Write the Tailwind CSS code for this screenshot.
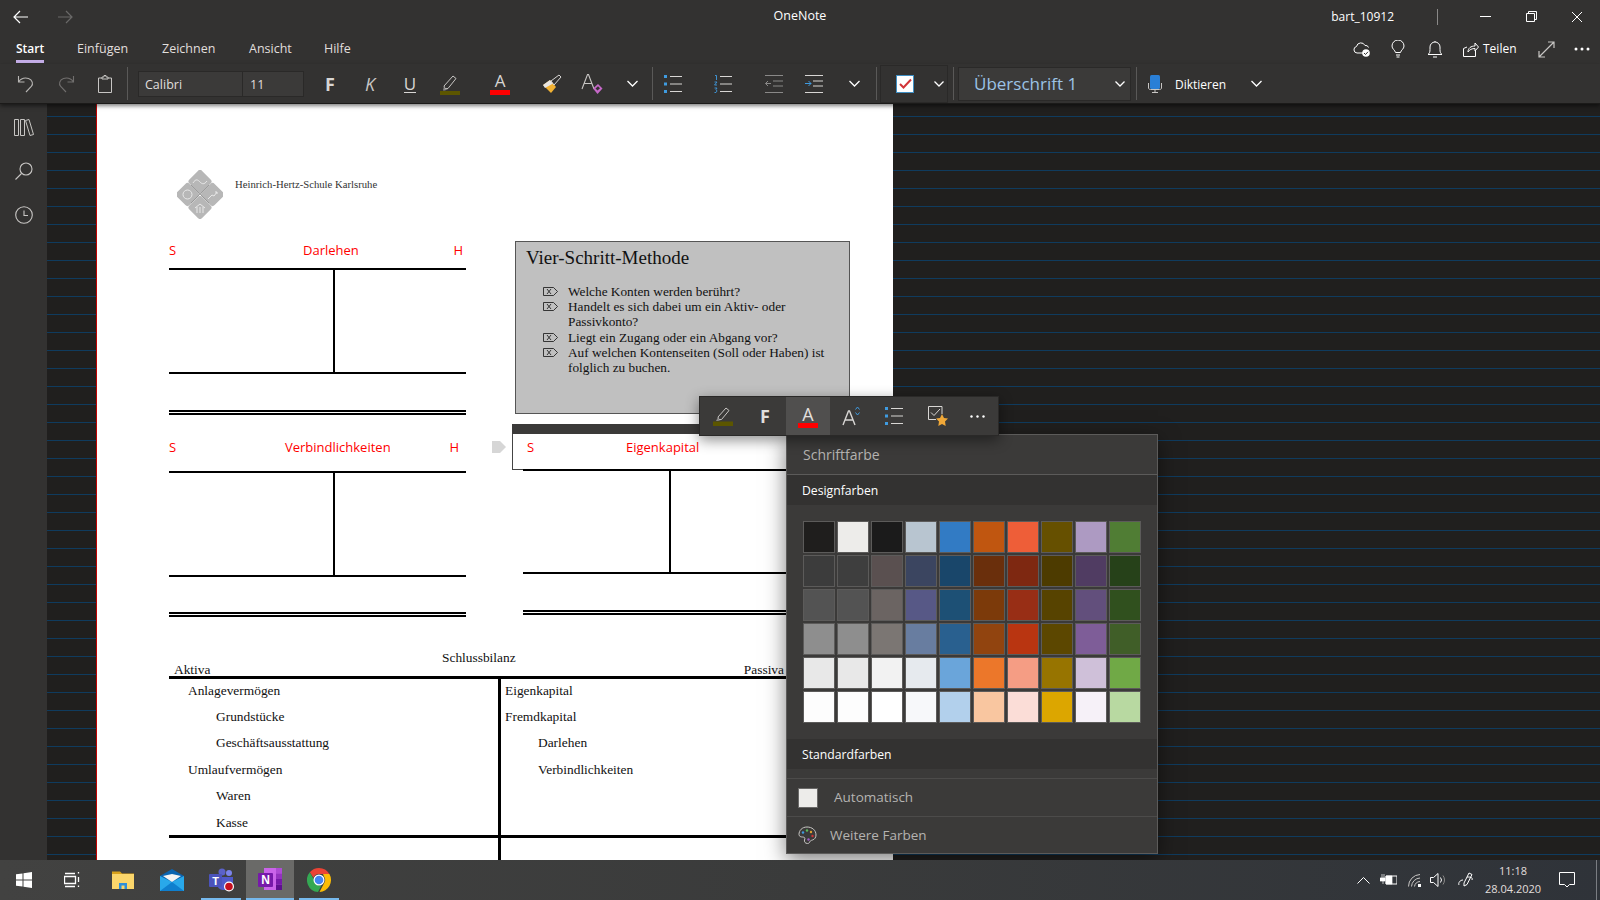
<!DOCTYPE html>
<html lang="de">
<head>
  <meta charset="UTF-8" />
  <title>OneNote</title>
  <script src="https://cdn.jsdelivr.net/npm/@tailwindcss/browser@4"></script>
</head>
<body class="w-[1600px] h-[900px] overflow-hidden flex flex-col bg-[#201f1e] font-['Open_Sans','Noto_Sans',sans-serif] text-[#e1dfdd]">

  <!-- Titelleiste -->
  <header class="h-[32px] pt-[1px] bg-[#333231] grid grid-cols-[1fr_auto_1fr] items-center text-[12.5px] text-white">
    <div class="flex items-center">
      <div class="w-[42px] flex justify-center">
        <svg width="16" height="14" viewBox="0 0 16 14" fill="none" stroke="#fff" stroke-width="1.2"><path d="M15 7H1M7 1 1 7l6 6"/></svg>
      </div>
      <div class="w-[46px] flex justify-center">
        <svg width="16" height="14" viewBox="0 0 16 14" fill="none" stroke="#6a6968" stroke-width="1.2"><path d="M1 7h14M9 1l6 6-6 6"/></svg>
      </div>
    </div>
    <div>OneNote</div>
    <div class="flex items-center justify-end">
      <span class="mr-[43px] text-[12px]">bart_10912</span>
      <span class="w-px h-[16px] bg-[#8a8988] mr-[24px]"></span>
      <div class="w-[46px] flex justify-center"><svg width="11" height="11" viewBox="0 0 11 11" stroke="#fff"><path d="M0 5.5h11"/></svg></div>
      <div class="w-[46px] flex justify-center"><svg width="11" height="11" viewBox="0 0 11 11" fill="none" stroke="#fff"><path d="M.5 2.500h8v8h-8zM2.500 2.500v-2h8v8h-2"/></svg></div>
      <div class="w-[46px] flex justify-center"><svg width="12" height="12" viewBox="0 0 12 12" stroke="#fff"><path d="M1 1l10 10M11 1 1 11"/></svg></div>
    </div>
  </header>

  <!-- Tabs -->
  <nav class="h-[32px] bg-[#333231] flex items-start pt-[8px] pl-[16px] text-[12.5px] leading-[18px]">
    <div class="w-[61px]"><span class="inline-block text-[12px] font-semibold text-white border-b-[3px] border-[#c5aee8] pb-[2px]">Start</span></div>
    <div class="w-[85px]">Einfügen</div>
    <div class="w-[87px]">Zeichnen</div>
    <div class="w-[75px]">Ansicht</div>
    <div>Hilfe</div>
    <div class="ml-auto flex items-center h-[18px] text-white">
      <div class="w-[36px] flex justify-center">
        <svg width="18" height="16" viewBox="0 0 18 16" fill="none" stroke="#fff"><path d="M10 12H4a3.3 3.3 0 0 1-.5-6.500A4.500 4.500 0 0 1 12 4.500a3 3 0 0 1 3.500 2"/><circle cx="13" cy="12" r="3.800" fill="#fff" stroke="none"/><path d="M11 12l1.500 1.500L15 10.800" stroke="#333231"/></svg>
      </div>
      <div class="w-[36px] flex justify-center">
        <svg width="14" height="18" viewBox="0 0 14 18" fill="none" stroke="#fff"><path d="M4.500 12.500C4 10 1 9 1 6a6 6 0 0 1 12 0c0 3-3 4-3.500 6.500zM5 15h4M5.500 17h3"/></svg>
      </div>
      <div class="w-[38px] flex justify-center">
        <svg width="16" height="18" viewBox="0 0 16 18" fill="none" stroke="#fff"><path d="M1 14.500c1.500-1 2-2.500 2-5V7a5 5 0 0 1 10 0v2.500c0 2.500.5 4 2 5zM6 17h4M8 2V1"/></svg>
      </div>
      <div class="w-[29px] flex justify-center pl-[4px]">
        <svg width="16" height="16" viewBox="0 0 16 16" fill="none" stroke="#fff"><path d="M12.500 9v6.500H.5V7.500L4 6M5 11c0-4 3-6 7-6V2l3.500 4L12 10V7.500C9 7.500 6.500 8.500 5 11z"/></svg>
      </div>
      <span class="w-[45px] text-[12px]">Teilen</span>
      <div class="w-[36px] flex justify-center">
        <svg width="17" height="17" viewBox="0 0 17 17" fill="none" stroke="#c8c6c4" stroke-width="1.200"><path d="M1 16 16 1M10 1h6v6M1 10v6h6"/></svg>
      </div>
      <div class="w-[36px] flex justify-center pr-[1px]">
        <svg width="16" height="4" viewBox="0 0 16 4" fill="#fff"><circle cx="2" cy="2" r="1.500"/><circle cx="8" cy="2" r="1.500"/><circle cx="14" cy="2" r="1.500"/></svg>
      </div>
    </div>
  </nav>

  <!-- Werkzeugleiste -->
  <div class="relative z-10 h-[40px] bg-[#333231] flex items-center pl-[5px] text-[12.5px] border-b border-[#1b1a19] shadow-[0_2px_4px_rgba(0,0,0,0.5)]">
    <div class="w-[41px] flex justify-center"><svg width="18" height="18" viewBox="0 0 18 18" fill="none" stroke="#b8b6b4" stroke-width="1.100"><path d="M1.500 1v6h6M1.500 7C4 3.500 8 2.500 11.500 3.500c4 1.300 5 5.500 2.800 8L9 17"/></svg></div>
    <div class="w-[39px] flex justify-center"><svg width="18" height="18" viewBox="0 0 18 18" fill="none" stroke="#716f6e" stroke-width="1.100"><path d="M16.500 1v6h-6M16.500 7C14 3.500 10 2.500 6.500 3.500c-4 1.300-5 5.500-2.800 8L9 17"/></svg></div>
    <div class="w-[40px] flex justify-center"><svg width="14" height="18" viewBox="0 0 14 18" fill="none" stroke="#c8c6c4"><path d="M4 3H.5v14.500h13V3H10M4 4V2h2V.5h2V2h2v2z"/></svg></div>
    <span class="ml-[2px] w-px h-[33px] bg-[#5a5958]"></span>
    <div class="ml-[10px] w-[166px] h-[26px] flex border border-[#2a2928] bg-[#3b3a39]">
      <span class="w-[104px] pl-[6px] leading-[26px] border-r border-[#2a2928]">Calibri</span>
      <span class="pl-[7px] leading-[26px]">11</span>
    </div>
    <div class="ml-[6px] w-[40px] text-center text-[18px] font-bold leading-none text-[#d8d6d4]">F</div>
    <div class="w-[40px] text-center text-[18px] italic leading-none text-[#c8c6c4]">K</div>
    <div class="w-[40px] text-center text-[17px] leading-none text-[#d8d6d4] flex justify-center"><span class="border-b border-[#d8d6d4]">U</span></div>
    <div class="w-[40px] flex justify-center">
      <svg width="20" height="22" viewBox="0 0 20 22"><path d="M4 13 13 3l3 2.500-8 10H5z" fill="none" stroke="#c8c6c4"/><path d="M4 13l1 2.500 3 .500-3 1.500H3z" fill="#8a8988"/><rect y="18" width="20" height="4" fill="#5c5600"/></svg>
    </div>
    <div class="ml-[10px] w-[40px] flex flex-col items-center">
      <span class="text-[17px] leading-[18px] text-[#d8d6d4]">A</span>
      <span class="w-[20px] h-[5px] bg-[#ff0000]"></span>
    </div>
    <div class="ml-[12px] w-[40px] flex justify-center">
      <svg width="20" height="20" viewBox="0 0 20 20"><path d="M1 11l7-5 6 7-5 6z" fill="#f2b233"/><path d="M1 11l7-5 3 3.500L3 14z" fill="#e8e6e3"/><path d="M9 7l3 4 7-8-2-2z" fill="none" stroke="#d8d6d4"/></svg>
    </div>
    <div class="w-[40px] flex justify-center">
      <svg width="22" height="22" viewBox="0 0 22 22"><path d="M1 16 6.500 1.500h1L13 16M3.500 10.500h7" fill="none" stroke="#c8c6c4" stroke-width="1.100"/><path d="M12 15.500 17 11l4.500 4.500L16.500 21z" fill="#c668c8"/><path d="M14.500 15.500 17 13.300l2 2-2.500 2.300z" fill="#333231"/></svg>
    </div>
    <div class="w-[40px] flex justify-center"><svg width="11" height="7" viewBox="0 0 11 7" fill="none" stroke="#fff" stroke-width="1.300"><path d="M.5 1l5 5 5-5"/></svg></div>
    <span class="w-px h-[33px] bg-[#5a5958]"></span>
    <div class="w-[39px] flex justify-center">
      <svg width="18" height="18" viewBox="0 0 18 18"><path d="M0 0h3v3H0zM0 7.500h3v3H0zM0 15h3v3H0z" fill="#3f9be0"/><path d="M6 1.500h12M6 9h12M6 16.500h12" stroke="#d8d6d4"/></svg>
    </div>
    <div class="ml-[11px] w-[40px] flex justify-center">
      <svg width="18" height="18" viewBox="0 0 18 18"><path d="M1 .5h1.500V5M.5 7h2.500L.5 10h2.500M.5 13h2.500l-1 1.500 1 1.500-1 1.500H.5" fill="none" stroke="#3f9be0" stroke-width=".9"/><path d="M6 1.500h12M6 9h12M6 16.500h12" stroke="#d8d6d4"/></svg>
    </div>
    <div class="ml-[11px] w-[40px] flex justify-center">
      <svg width="18" height="18" viewBox="0 0 18 18" fill="none" stroke="#8a8988"><path d="M0 .5h18M8 6h10M8 11h10M0 17.500h18M6 8.500H.5M3 6 .5 8.500 3 11"/></svg>
    </div>
    <div class="w-[40px] flex justify-center">
      <svg width="18" height="18" viewBox="0 0 18 18" fill="none"><path d="M0 .5h18M8 6h10M8 11h10M0 17.500h18" stroke="#d8d6d4"/><path d="M0 8.500h6M3.500 6 6 8.500 3.500 11" stroke="#3f9be0"/></svg>
    </div>
    <div class="w-[40px] flex justify-center"><svg width="11" height="7" viewBox="0 0 11 7" fill="none" stroke="#fff" stroke-width="1.300"><path d="M.5 1l5 5 5-5"/></svg></div>
    <span class="ml-[2px] w-px h-[33px] bg-[#5a5958]"></span>
    <div class="ml-[3px] w-[68px] h-[38px] flex items-center border border-[#2a2928]">
      <div class="ml-[15px] w-[18px] h-[18px] bg-white border border-[#3f8fc4] flex items-center justify-center">
        <svg width="13" height="11" viewBox="0 0 13 11" fill="none" stroke="#d13438" stroke-width="2"><path d="M1 6l3.500 3.500L12 1.500"/></svg>
      </div>
      <svg class="ml-[20px]" width="10" height="6" viewBox="0 0 10 6" fill="none" stroke="#fff" stroke-width="1.300"><path d="M.5.500l4.500 4.500L9.500.5"/></svg>
    </div>
    <span class="ml-[5px] w-px h-[33px] bg-[#5a5958]"></span>
    <div class="ml-[4px] w-[173px] h-[34px] flex items-center border border-[#2a2928] bg-[#3b3a39] text-[17px] text-[#9cc3e6]">
      <span class="pl-[15px]">Überschrift 1</span>
      <svg class="ml-auto mr-[5px]" width="10" height="6" viewBox="0 0 10 6" fill="none" stroke="#fff" stroke-width="1.300"><path d="M.5.500l4.500 4.500L9.500.5"/></svg>
    </div>
    <span class="ml-[5px] w-px h-[33px] bg-[#5a5958]"></span>
    <div class="ml-[6px] w-[24px] flex justify-center">
      <svg width="14" height="18" viewBox="0 0 14 18"><rect x="2" y="0" width="10" height="14" rx="1.500" fill="#2a7fd6"/><path d="M.5 8v5c0 1 1 1.500 2 1.500h9c1 0 2-.5 2-1.500V8M7 15v2M4 17.500h6" fill="none" stroke="#c8c6c4"/></svg>
    </div>
    <span class="ml-[8px] mt-[2px] w-[50px] text-[12px] whitespace-nowrap text-white">Diktieren</span>
    <div class="ml-[11px] w-[40px] flex justify-center"><svg width="11" height="7" viewBox="0 0 11 7" fill="none" stroke="#fff" stroke-width="1.300"><path d="M.5 1l5 5 5-5"/></svg></div>
  </div>

  <main class="relative flex-1 flex overflow-hidden min-h-0">
    <!-- Seitenleiste -->
    <aside class="w-[47px] shrink-0 bg-[#333231] flex flex-col items-center pt-[15px]">
      <svg width="20" height="17" viewBox="0 0 20 17" fill="none" stroke="#c8c6c4"><path d="M.5.500h4v16h-4zM6.500.500h4v16h-4zM11.500 1.500l3.500-1 4.500 15-3.500 1z"/></svg>
      <svg class="mt-[26px]" width="18" height="18" viewBox="0 0 18 18" fill="none" stroke="#c8c6c4" stroke-width="1.100"><circle cx="11" cy="7" r="6"/><path d="M6.500 11.500 .5 17.500"/></svg>
      <svg class="mt-[26px]" width="18" height="18" viewBox="0 0 18 18" fill="none" stroke="#c8c6c4" stroke-width="1.100"><circle cx="9" cy="9" r="8.300"/><path d="M9 4.500V9.500h4"/></svg>
    </aside>

    <!-- Notizbereich -->
    <section class="flex-1 pl-[49px] bg-[#201f1e] bg-[linear-gradient(to_bottom,transparent_12px,#0f3b5e_12px,#0f3b5e_13px,transparent_13px)] bg-[size:100%_18px]">
      <div class="relative w-[797px] h-full bg-white border-l border-[#c00000] text-black overflow-hidden">

        <svg class="absolute left-[80px] top-[66px]" width="46" height="49" viewBox="0 0 46 49">
          <g fill="#b7b7b7">
            <rect x="14" y="2.500" width="18" height="18" rx="3" transform="rotate(45 23 11.500)"/>
            <rect x="1.500" y="15.500" width="18" height="18" rx="3" transform="rotate(45 10.500 24.500)"/>
            <rect x="26.500" y="15.500" width="18" height="18" rx="3" transform="rotate(45 35.500 24.500)"/>
            <rect x="14" y="28.500" width="18" height="18" rx="3" transform="rotate(45 23 37.500)"/>
          </g>
          <g fill="none" stroke="#e8e8e8" stroke-width="1">
            <path d="M16 13c3-5 5-3 7-1s4 3 7-1"/>
            <circle cx="10.500" cy="24.500" r="4.500"/>
            <path d="M31 29l4-4 2 1 3-4M38 22h2v2"/>
            <path d="M18 38l5-4 5 4M20 37v6M26 37v6M23 37v6"/>
          </g>
          <path d="M14 15l18 18M32 15 14 33" stroke="#8f8f8f" stroke-width=".8"/>
        </svg>
        <div class="absolute left-[138px] top-[70px] font-['Liberation_Serif',serif] text-[10.700px] leading-[21px] text-[#333]">Heinrich-Hertz-Schule Karlsruhe</div>

        <!-- Darlehen -->
        <div class="absolute left-[72px] top-[137px] w-[297px]">
          <div class="flex h-[27px] text-[#ff0000] text-[13px] leading-[18px]">
            <span class="w-[134px]">S</span><span class="flex-1">Darlehen</span><span class="pr-[3px]">H</span>
          </div>
          <div class="border-y-2 border-black h-[106px]"><div class="w-[166px] h-full border-r-2 border-black"></div></div>
          <div class="mt-[36px] h-[5px] border-y-2 border-black"></div>
        </div>

        <!-- Verbindlichkeiten -->
        <div class="absolute left-[72px] top-[334px] w-[297px]">
          <div class="flex h-[33px] text-[#ff0000] text-[13px] leading-[18px]">
            <span class="w-[116px]">S</span><span class="flex-1">Verbindlichkeiten</span><span class="pr-[7px]">H</span>
          </div>
          <div class="border-y-2 border-black h-[106px]"><div class="w-[166px] h-full border-r-2 border-black"></div></div>
          <div class="mt-[35px] h-[5px] border-y-2 border-black"></div>
        </div>

        <!-- Vier-Schritt-Methode -->
        <div class="absolute left-[418px] top-[137px] w-[335px] h-[173px] bg-[#c0c0c0] border border-[#555] font-['Liberation_Serif',serif] text-[#111]">
          <h2 class="pl-[10px] pt-[3px] text-[19px] leading-[26px]">Vier-Schritt-Methode</h2>
          <ul class="mt-[13px] pl-[27px] pr-[20px] text-[13.300px] leading-[15.200px]">
            <li class="flex"><svg class="mt-[3px] w-[15px] h-[9px] shrink-0" viewBox="0 0 15 9" fill="none" stroke="#111" stroke-width=".8"><path d="M.5.500h10l4 4-4 4H.5zM4 2l4 5M8 2 4 7"/></svg><span class="ml-[10px]">Welche Konten werden berührt?</span></li>
            <li class="flex"><svg class="mt-[3px] w-[15px] h-[9px] shrink-0" viewBox="0 0 15 9" fill="none" stroke="#111" stroke-width=".8"><path d="M.5.500h10l4 4-4 4H.5zM4 2l4 5M8 2 4 7"/></svg><span class="ml-[10px]">Handelt es sich dabei um ein Aktiv- oder Passivkonto?</span></li>
            <li class="flex"><svg class="mt-[3px] w-[15px] h-[9px] shrink-0" viewBox="0 0 15 9" fill="none" stroke="#111" stroke-width=".8"><path d="M.5.500h10l4 4-4 4H.5zM4 2l4 5M8 2 4 7"/></svg><span class="ml-[10px]">Liegt ein Zugang oder ein Abgang vor?</span></li>
            <li class="flex"><svg class="mt-[3px] w-[15px] h-[9px] shrink-0" viewBox="0 0 15 9" fill="none" stroke="#111" stroke-width=".8"><path d="M.5.500h10l4 4-4 4H.5zM4 2l4 5M8 2 4 7"/></svg><span class="ml-[10px]">Auf welchen Kontenseiten (Soll oder Haben) ist folglich zu buchen.</span></li>
          </ul>
        </div>

        <!-- Griff vor dem markierten Container -->
        <svg class="absolute left-[395px] top-[337px]" width="14" height="12" viewBox="0 0 14 12"><path d="M0 0h8l6 6-6 6H0z" fill="#d6d6d6"/></svg>

        <!-- Eigenkapital, markierter Container -->
        <div class="absolute left-[415px] top-[320px] w-[400px]">
          <div class="h-[10px] bg-[#3b3a39] flex items-center pl-[270px]"><span class="w-[14px] border-t-2 border-dotted border-[#8a8988]"></span></div>
          <div class="h-[36px] flex pt-[4px] border-x border-b border-[#444] text-[#ff0000] text-[13px] leading-[18px]">
            <span class="pl-[14px] w-[113px]">S</span><span>Eigenkapital</span>
          </div>
          <div class="-mt-[1px] ml-[11px] w-[297px]">
            <div class="border-y-2 border-black h-[105px]"><div class="w-[148px] h-full border-r-2 border-black"></div></div>
            <div class="mt-[36px] h-[5px] border-y-2 border-black"></div>
          </div>
        </div>

        <!-- Schlussbilanz -->
        <div class="absolute left-[72px] top-[546px] w-[620px] font-['Liberation_Serif',serif] text-[13.400px] text-[#111]">
          <div class="pl-[273px] h-[16px] leading-[16px]">Schlussbilanz</div>
          <div class="flex justify-between pl-[5px] pr-[5px] h-[10px] leading-[8px]"><span>Aktiva</span><span>Passiva</span></div>
          <div class="border-y-[3px] border-black flex h-[162px]">
            <div class="w-[332px] border-r-[3px] border-black pl-[19px] [&>div]:h-[26px] [&>div]:leading-[26px]">
              <div class="-mt-[1px]">Anlagevermögen</div>
              <div class="pl-[28px]">Grundstücke</div>
              <div class="pl-[28px]">Geschäftsausstattung</div>
              <div class="mt-[1px]">Umlaufvermögen</div>
              <div class="pl-[28px]">Waren</div>
              <div class="pl-[28px] mt-[1px]">Kasse</div>
            </div>
            <div class="pl-[4px] [&>div]:h-[26px] [&>div]:leading-[26px]">
              <div class="-mt-[1px]">Eigenkapital</div>
              <div>Fremdkapital</div>
              <div class="pl-[33px]">Darlehen</div>
              <div class="pl-[33px] mt-[1px]">Verbindlichkeiten</div>
            </div>
          </div>
          <div class="w-[332px] h-[30px] border-r-[3px] border-black"></div>
        </div>
      </div>
    </section>

    <!-- Schwebende Leiste -->
    <div class="absolute left-[699px] top-[292px] z-20 w-[300px] h-[40px] flex items-center bg-[#3b3a39] border border-[#2a2928] shadow-[0_4px_14px_rgba(0,0,0,0.45)]">
      <div class="w-[44px] h-full flex items-center justify-center pl-[2px]">
        <svg width="20" height="20" viewBox="0 0 20 20"><path d="M5 11 13 2l3 2.500-7.500 9H6z" fill="none" stroke="#c8c6c4"/><path d="M5 11l1 2.500 2 .500-3 1H3z" fill="#8a8988"/><rect y="15.500" width="20" height="4.500" fill="#5c5600"/></svg>
      </div>
      <div class="w-[42px] text-center text-[18px] font-bold leading-none text-[#e1dfdd]">F</div>
      <div class="w-[44px] h-full flex flex-col items-center justify-center bg-[#504f4e]">
        <span class="text-[18px] leading-[18px] text-[#e1dfdd]">A</span>
        <span class="w-[20px] h-[5px] bg-[#ff0000]"></span>
      </div>
      <div class="w-[42px] flex justify-center pl-[2px]">
        <svg width="20" height="20" viewBox="0 0 20 20"><path d="M1 19 6.500 5h1L13 19M3 14h8" fill="none" stroke="#d8d6d4" stroke-width="1.400"/><path d="M13.500 3.500 15.500 1l2 2.500M13.500 6.500l2 2.500 2-2.500" fill="none" stroke="#3f9be0"/></svg>
      </div>
      <div class="w-[44px] flex justify-center">
        <svg width="18" height="18" viewBox="0 0 18 18"><path d="M0 0h3v3H0zM0 7.500h3v3H0zM0 15h3v3H0z" fill="#3f9be0"/><path d="M6 1.500h12M6 9h12M6 16.500h12" stroke="#d8d6d4"/></svg>
      </div>
      <div class="w-[43px] flex justify-center">
        <svg width="20" height="20" viewBox="0 0 20 20"><path d="M14 8V.5H.5v13H8" fill="none" stroke="#d8d6d4"/><path d="M3 6.500l3 3L12 3" fill="none" stroke="#d8d6d4"/><path d="M14 8l2 4 4 .500-3 3 .700 4.500-3.700-2-3.700 2 .700-4.500-3-3 4-.500z" fill="#f0a838"/></svg>
      </div>
      <div class="w-[37px] flex justify-center">
        <svg width="15" height="3" viewBox="0 0 15 3" fill="#fff"><circle cx="1.500" cy="1.500" r="1.200"/><circle cx="7.500" cy="1.500" r="1.200"/><circle cx="13.500" cy="1.500" r="1.200"/></svg>
      </div>
    </div>

    <!-- Schriftfarbe -->
    <div class="absolute left-[786px] top-[330px] z-10 w-[372px] h-[420px] flex flex-col bg-[#3b3a39] border border-[#5c5b5a] shadow-[0_6px_20px_rgba(0,0,0,0.5)]">
      <div class="h-[40px] shrink-0 pl-[16px] flex items-center text-[14px] text-[#b5b3b1] border-b border-[#5c5b5a]">Schriftfarbe</div>
      <div class="h-[30px] shrink-0 pl-[15px] pt-[3px] flex items-center bg-[#333231] text-[12.200px] text-white">Designfarben</div>
      <div class="mt-[16px] ml-[16px] grid grid-cols-[repeat(10,32px)] auto-rows-[32px] gap-[2px] [&>div]:border [&>div]:border-[#5c5b5a]">
        <div class="bg-[#1f1e1d]"></div><div class="bg-[#edecea]"></div><div class="bg-[#1b1b1b]"></div><div class="bg-[#b8c5d0]"></div><div class="bg-[#327bc4]"></div><div class="bg-[#c05610]"></div><div class="bg-[#ee5e38]"></div><div class="bg-[#665000]"></div><div class="bg-[#ad9ac2]"></div><div class="bg-[#507d34]"></div>
        <div class="bg-[#3c3c3c]"></div><div class="bg-[#3e3e3e]"></div><div class="bg-[#5a5050]"></div><div class="bg-[#3b4560]"></div><div class="bg-[#19466a]"></div><div class="bg-[#6a2f0c]"></div><div class="bg-[#7e2811]"></div><div class="bg-[#4d3b00]"></div><div class="bg-[#503c62]"></div><div class="bg-[#264119]"></div>
        <div class="bg-[#535353]"></div><div class="bg-[#535353]"></div><div class="bg-[#6b6462]"></div><div class="bg-[#575886]"></div><div class="bg-[#1d5075]"></div><div class="bg-[#7c3a0a]"></div><div class="bg-[#982e15]"></div><div class="bg-[#574300]"></div><div class="bg-[#624f7c]"></div><div class="bg-[#30501e]"></div>
        <div class="bg-[#8e8e8e]"></div><div class="bg-[#8e8e8e]"></div><div class="bg-[#7b7673]"></div><div class="bg-[#687da0]"></div><div class="bg-[#29608f]"></div><div class="bg-[#91440f]"></div><div class="bg-[#b93511]"></div><div class="bg-[#5c4700]"></div><div class="bg-[#7e5d98]"></div><div class="bg-[#405e28]"></div>
        <div class="bg-[#e8e8e8]"></div><div class="bg-[#e8e8e8]"></div><div class="bg-[#f2f2f2]"></div><div class="bg-[#e6eaee]"></div><div class="bg-[#6aa5da]"></div><div class="bg-[#ec772a]"></div><div class="bg-[#f59d84]"></div><div class="bg-[#977400]"></div><div class="bg-[#cfc0d9]"></div><div class="bg-[#70a946]"></div>
        <div class="bg-[#fdfdfd]"></div><div class="bg-[#fdfdfd]"></div><div class="bg-white"></div><div class="bg-[#f7f8fa]"></div><div class="bg-[#b2d0ec]"></div><div class="bg-[#f9c6a0]"></div><div class="bg-[#fbddd7]"></div><div class="bg-[#dca600]"></div><div class="bg-[#f6f1f8]"></div><div class="bg-[#b8d9a1]"></div>
      </div>
      <div class="mt-[16px] h-[30px] shrink-0 pl-[15px] pt-[3px] flex items-center bg-[#333231] text-[12.200px] text-white">Standardfarben</div>
      <div class="mt-[9px] h-[38px] shrink-0 pl-[11px] flex items-center border-t border-[#4c4b4a] text-[13.500px] text-[#b5b3b1]">
        <span class="w-[20px] h-[20px] bg-[#edecea] border border-[#6a6968]"></span>
        <span class="ml-[16px]">Automatisch</span>
      </div>
      <div class="flex-1 pl-[11px] flex items-center border-t border-[#4c4b4a] text-[13.500px] text-[#b5b3b1]">
        <svg width="19" height="19" viewBox="0 0 19 19"><path d="M9 1C4 1 1 4.500 1 8.500c0 2 2 2.500 3.500 2.500 2 0 3 1 2 3-.5 1.500.5 3.500 3 3.500 1 0 2-.5 2.500-2 .5-1 1-1 2.500-1.500 2-.5 3.500-2.500 3.500-5C18 4 14 1 9 1z" fill="none" stroke="#c8c6c4"/><circle cx="5" cy="6.500" r="1.200" fill="#3f9be0"/><circle cx="9" cy="4.500" r="1.200" fill="#5cb85c"/><circle cx="13" cy="6" r="1.200" fill="#e0a030"/><circle cx="14.500" cy="10" r="1.200" fill="#d13438"/><circle cx="10.500" cy="13.500" r="1.200" fill="#a05cc8"/></svg>
        <span class="ml-[13px]">Weitere Farben</span>
      </div>
    </div>
  </main>

  <!-- Taskleiste -->
  <footer class="h-[40px] shrink-0 flex items-center bg-linear-to-r from-[#424241] via-[#3a3b3b] to-[#2f3339] text-white">
    <div class="w-[48px] flex justify-center">
      <svg width="16" height="16" viewBox="0 0 16 16" fill="#fff"><path d="M0 2.300 6.500 1.400V7.500H0zM7.500 1.300 16 0v7.500H7.500zM0 8.500h6.500v6.100L0 13.700zM7.500 8.500H16V16l-8.500-1.300z"/></svg>
    </div>
    <div class="w-[48px] flex justify-center">
      <svg width="17" height="16" viewBox="0 0 17 16" fill="none" stroke="#fff"><path d="M.5 4.500h11v7H.5zM1 1.500h10M1 14.500h10M14.500 0v1.500M14.500 5v5M14.500 13.500V15" stroke-width="1.300"/></svg>
    </div>
    <div class="ml-[3px] w-[48px] flex justify-center">
      <svg width="22" height="20" viewBox="0 0 22 20"><path d="M0 1.500h8l2 2h12V6H0z" fill="#d9a21b"/><path d="M0 4h22v15H0z" fill="#fbd66b"/><path d="M7 19v-6h8v6h-2.500v-3.500h-3V19z" fill="#2f8fd8"/></svg>
    </div>
    <div class="ml-[1px] w-[48px] flex justify-center">
      <svg width="24" height="22" viewBox="0 0 24 22"><path d="M0 7h24v15H0z" fill="#29a8ea"/><path d="M0 7 12 0l12 7-12 6z" fill="#0a64b0"/><path d="M3 7l9-2 9 2-9 6z" fill="#f4f4f4"/><path d="M0 22l12-9 12 9z" fill="#0f7fce"/></svg>
    </div>
    <div class="ml-[1px] w-[48px] h-full relative flex justify-center items-center">
      <svg width="25" height="24" viewBox="0 0 25 24"><circle cx="20" cy="5" r="3" fill="#7b83eb"/><circle cx="13" cy="4" r="3.500" fill="#5b62c9"/><path d="M8 9h16v9a4 4 0 0 1-4 4h-6a6 6 0 0 1-6-6z" fill="#5059c9"/><rect y="6" width="13" height="13" rx="1" fill="#4b53bc"/><text x="6.500" y="16.500" text-anchor="middle" font-family="Liberation Sans" font-weight="700" font-size="11" fill="#fff">T</text><circle cx="20" cy="18.500" r="5" fill="#fff"/><circle cx="20" cy="18.500" r="3.800" fill="#c50f1f"/></svg>
      <span class="absolute bottom-0 left-[4px] w-[40px] h-[2px] bg-[#76b9ed]"></span>
    </div>
    <div class="ml-[1px] w-[48px] h-full flex justify-center items-center bg-[#6a6a68] border-b-[2px] border-[#76b9ed]">
      <svg width="24" height="22" viewBox="0 0 24 22"><path d="M6 0h18v22H6z" fill="#ca64ea"/><path d="M18 0h6v5.500h-6z" fill="#ae4bd5"/><path d="M18 5.500h6V11h-6z" fill="#9332bf"/><path d="M18 11h6v5.500h-6z" fill="#7719aa"/><path d="M18 16.500h6V22h-6z" fill="#5e1090"/><rect y="5" width="15" height="14" rx="1" fill="#7719aa"/><text x="7.500" y="16" text-anchor="middle" font-family="Liberation Sans" font-weight="700" font-size="12" fill="#fff">N</text></svg>
    </div>
    <div class="ml-[1px] w-[48px] h-full relative flex justify-center items-center">
      <svg width="24" height="24" viewBox="0 0 24 24"><path d="M12 0a12 12 0 0 1 10.400 6H12a6 6 0 0 0-5.600 3.700L2.800 4.300A12 12 0 0 1 12 0z" fill="#ea4335"/><path d="M22.400 6A12 12 0 0 1 12.500 24l4.700-8.900A6 6 0 0 0 17 8.500L16 6z" fill="#fbbc05"/><path d="M2.800 4.300l4.600 7.900a6 6 0 0 0 7 5.300L11 24A12 12 0 0 1 2.800 4.300z" fill="#34a853"/><circle cx="12" cy="12" r="5.500" fill="#fff"/><circle cx="12" cy="12" r="4.300" fill="#4285f4"/></svg>
      <span class="absolute bottom-0 left-[4px] w-[40px] h-[2px] bg-[#76b9ed]"></span>
    </div>
    <div class="ml-auto h-full flex items-center">
      <svg width="13" height="8" viewBox="0 0 13 8" fill="none" stroke="#fff"><path d="M.5 7.500 6.500 1.500l6 6"/></svg>
      <svg class="ml-[10px]" width="17" height="12" viewBox="0 0 17 12"><path d="M6 2h11v8H6z" fill="none" stroke="#fff"/><path d="M6 2h6v8H6zM0 4h5v3H0zM2 0v4M4 0v4M3 7v3" fill="#fff" stroke="#fff" stroke-width=".7"/></svg>
      <svg class="ml-[11px]" width="13" height="13" viewBox="0 0 13 13" fill="none" stroke="#c8c6c4"><path d="M.5 12.500A12 12 0 0 1 12 .5M3.500 12.500A9 9 0 0 1 12 4M6.500 12.500A6 6 0 0 1 12 7.500"/><rect x="10" y="10" width="3" height="3" fill="#fff" stroke="none"/></svg>
      <svg class="ml-[9px]" width="16" height="14" viewBox="0 0 16 14" fill="none" stroke="#fff"><path d="M.5 4.500h3L8 .5v13l-4.500-4h-3zM10.500 4.500a4 4 0 0 1 0 5"/><path d="M13 2.500a8 8 0 0 1 0 9" stroke="#8a8988"/></svg>
      <svg class="ml-[12px]" width="16" height="16" viewBox="0 0 16 16" fill="none" stroke="#fff"><path d="M6 11l5-10 3 1.500-5 10L6 14zM9 5c3 0 6 0 5 3M5 8c-3 0-5 3-4 5"/></svg>
      <div class="ml-[11px] w-[56px] text-center text-[11px] leading-[18px] text-[#e1dfdd]">
        <div>11:18</div>
        <div class="whitespace-nowrap">28.04.2020</div>
      </div>
      <svg class="ml-[18px] mr-[21px]" width="16" height="16" viewBox="0 0 16 16" fill="none" stroke="#fff"><path d="M.5.500h15v12h-5L8 15l-2.500-2.500h-5z"/></svg>
      <span class="w-px h-full bg-[#7a7d82] mr-[3px]"></span>
    </div>
  </footer>
</body>
</html>
